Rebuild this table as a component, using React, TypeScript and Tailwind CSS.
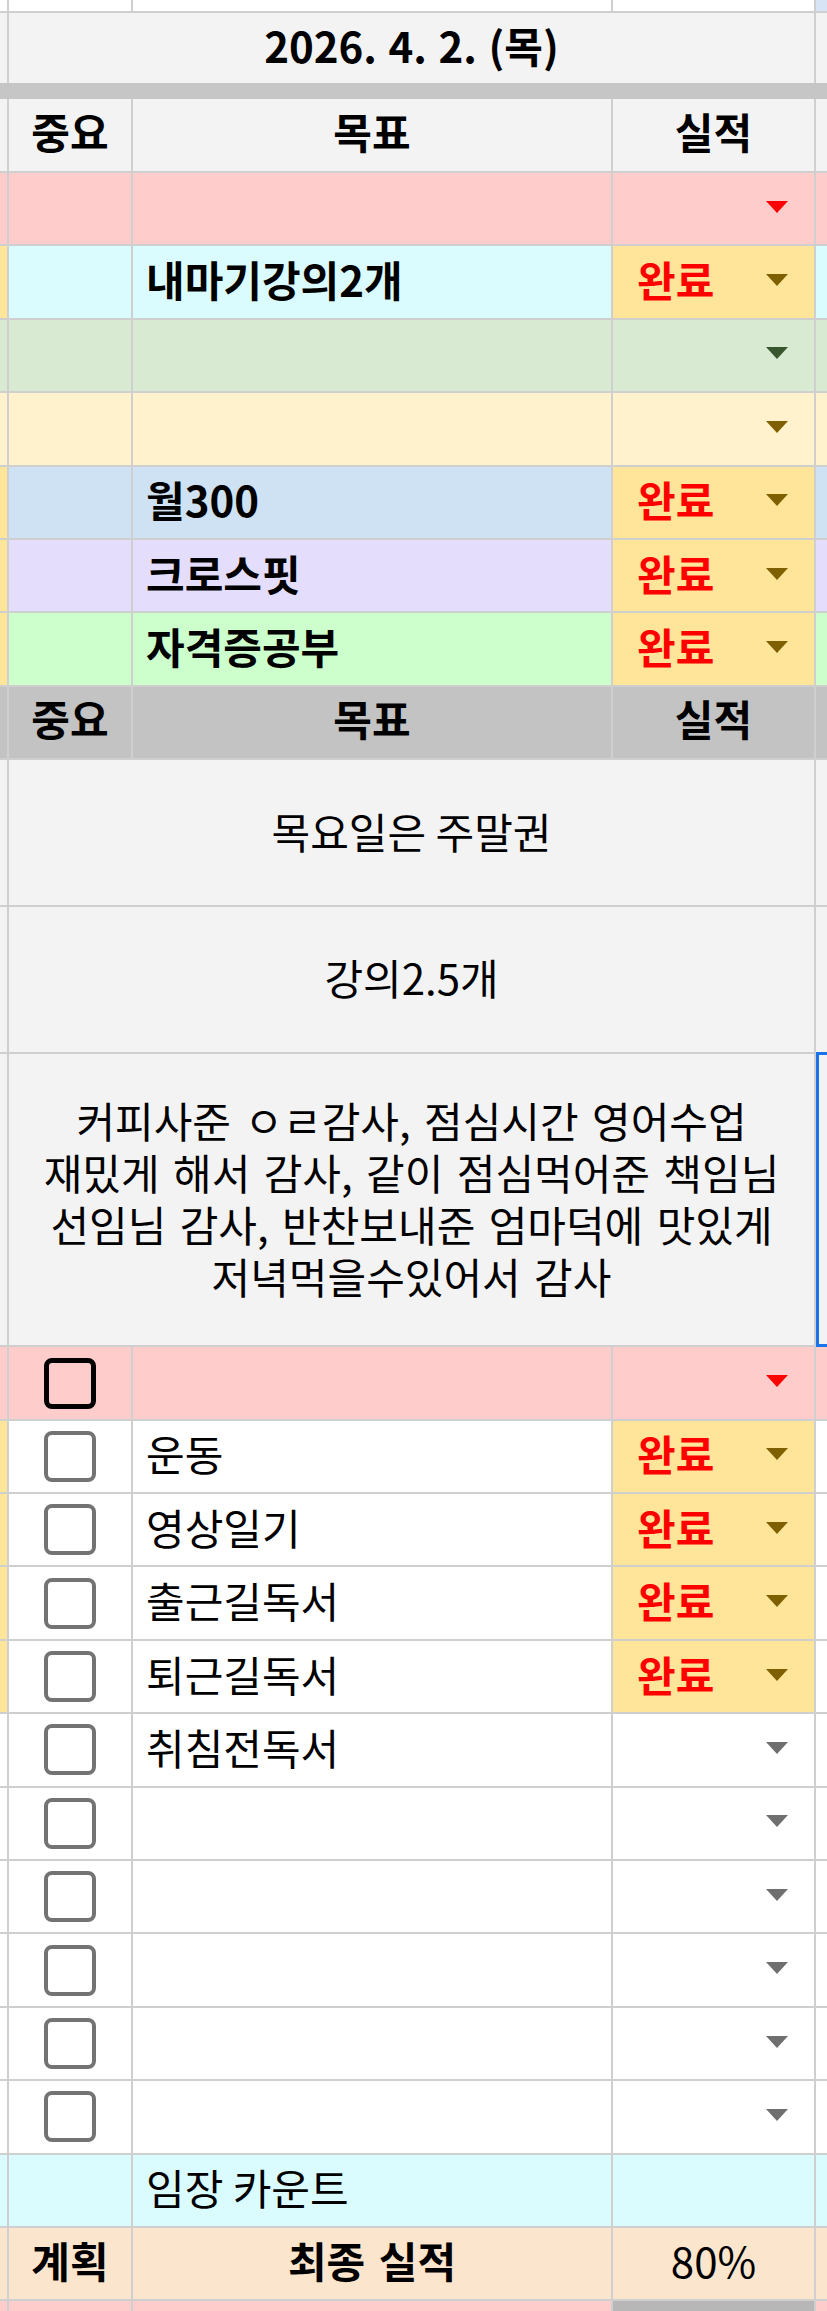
import type { ReactNode } from "react";

const LINE = "border-[#cfcfcf]";
const GRID = "grid grid-cols-[9px_124px_480px_203px_1fr]";
const WIDE = "grid grid-cols-[9px_807px_1fr]";
const ROW_H = "h-[73.4px]";

const PINK = "bg-[#ffcccc]";
const CYAN = "bg-[#dbfcff]";
const GREEN = "bg-[#d9ead3]";
const CREAM = "bg-[#fff2cc]";
const BLUE = "bg-[#cfe2f3]";
const LAVENDER = "bg-[#e4ddfc]";
const LIME = "bg-[#ccffcc]";
const GOLD = "bg-[#ffe599]";
const WHITE = "bg-white";
const PALE = "bg-[#f3f3f3]";
const GRAY = "bg-[#c3c3c3]";
const PEACH = "bg-[#fce5cd]";

const TRI_RED = "#ff0000";
const TRI_OLIVE = "#7f6000";
const TRI_GREEN = "#38572f";
const TRI_GRAY = "#6f6f6f";

function Tri({ color }: { color: string }) {
  return (
    <svg width="22" height="12" viewBox="0 0 22 12" className="ml-auto mb-[4px] shrink-0">
      <polygon points="0,0 22,0 11,12" fill={color} />
    </svg>
  );
}

function Check({ dark }: { dark?: boolean }) {
  return (
    <span
      className={
        "block h-[51px] w-[52px] rounded-[8px] " +
        (dark ? "border-[5px] border-black" : "border-[4px] border-[#737373] bg-white")
      }
    />
  );
}

function Edge({ bg, last }: { bg: string; last?: boolean }) {
  return <div className={`border-b-2 ${LINE} ${bg} ${last ? "" : "border-r-2"}`} />;
}

function Row({ left, right, children, h = ROW_H }: { left: string; right: string; children: ReactNode; h?: string }) {
  return (
    <div className={`${GRID} ${h}`}>
      <Edge bg={left} />
      {children}
      <Edge bg={right} last />
    </div>
  );
}

interface Task {
  bg: string;
  left: string;
  right?: string;
  text?: string;
  bold?: boolean;
  done?: boolean;
  tri?: string;
  check?: "dark" | "gray";
}

function TaskRow({ t }: { t: Task }) {
  const c3 = t.done ? GOLD : t.bg;
  return (
    <Row left={t.left} right={t.right ?? t.bg}>
      <div className={`flex items-center justify-center border-r-2 border-b-2 ${LINE} ${t.bg}`}>
        {t.check && <Check dark={t.check === "dark"} />}
      </div>
      <div
        className={`flex items-center border-r-2 border-b-2 ${LINE} ${t.bg} pb-[6px] pl-[13px] text-[42px] leading-none text-black ${
          t.bold ? "font-bold" : ""
        }`}
      >
        {t.text}
      </div>
      <div className={`flex items-center border-r-2 border-b-2 ${LINE} ${c3} pl-[24px] pr-[26px]`}>
        {t.done && <span className="pb-[6px] text-[42px] font-bold leading-none text-[#ff0000]">완료</span>}
        {t.tri && <Tri color={t.tri} />}
      </div>
    </Row>
  );
}

function HeaderRow({ bg, left, right, h = ROW_H }: { bg: string; left: string; right: string; h?: string }) {
  const cell = `flex items-center justify-center border-r-2 border-b-2 ${LINE} ${bg} pb-[8px] text-[42px] font-bold leading-none`;
  return (
    <Row left={left} right={right} h={h}>
      <div className={cell}>중요</div>
      <div className={cell}>목표</div>
      <div className={cell}>실적</div>
    </Row>
  );
}

function Note({ h, children, selected }: { h: string; children: ReactNode; selected?: boolean }) {
  return (
    <div className={`${WIDE} ${h}`}>
      <Edge bg={PALE} />
      <div
        className={`flex flex-col items-center justify-center border-r-2 border-b-2 ${LINE} ${PALE} pb-[4px] text-center text-[42px] leading-[52px] text-black`}
      >
        {children}
      </div>
      <div className={`relative border-b-2 ${LINE} ${PALE}`}>
        {selected && (
          <div className="absolute -top-[2px] -bottom-[2px] left-0 w-[40px] border-[3px] border-[#1a73e8]" />
        )}
      </div>
    </div>
  );
}

const GOALS: Task[] = [
  { bg: PINK, left: PINK, tri: TRI_RED },
  { bg: CYAN, left: GOLD, text: "내마기강의2개", bold: true, done: true, tri: TRI_OLIVE },
  { bg: GREEN, left: GREEN, tri: TRI_GREEN },
  { bg: CREAM, left: CREAM, tri: TRI_OLIVE },
  { bg: BLUE, left: GOLD, text: "월300", bold: true, done: true, tri: TRI_OLIVE },
  { bg: LAVENDER, left: GOLD, text: "크로스핏", bold: true, done: true, tri: TRI_OLIVE },
  { bg: LIME, left: GOLD, text: "자격증공부", bold: true, done: true, tri: TRI_OLIVE },
];

const ROUTINE: Task[] = [
  { bg: PINK, left: PINK, tri: TRI_RED, check: "dark" },
  { bg: WHITE, left: GOLD, text: "운동", done: true, tri: TRI_OLIVE, check: "gray" },
  { bg: WHITE, left: GOLD, text: "영상일기", done: true, tri: TRI_OLIVE, check: "gray" },
  { bg: WHITE, left: GOLD, text: "출근길독서", done: true, tri: TRI_OLIVE, check: "gray" },
  { bg: WHITE, left: GOLD, text: "퇴근길독서", done: true, tri: TRI_OLIVE, check: "gray" },
  { bg: WHITE, left: WHITE, text: "취침전독서", tri: TRI_GRAY, check: "gray" },
  { bg: WHITE, left: WHITE, tri: TRI_GRAY, check: "gray" },
  { bg: WHITE, left: WHITE, tri: TRI_GRAY, check: "gray" },
  { bg: WHITE, left: WHITE, tri: TRI_GRAY, check: "gray" },
  { bg: WHITE, left: WHITE, tri: TRI_GRAY, check: "gray" },
  { bg: WHITE, left: WHITE, tri: TRI_GRAY, check: "gray" },
];

export default function App() {
  return (
    <div className="h-[2311px] w-[827px] overflow-hidden bg-white font-['Noto_Sans_CJK_KR','Noto_Sans',sans-serif] text-black">
      {/* row cut off at the top */}
      <Row left={WHITE} right="bg-[#d6e4f6]" h="h-[13px]">
        <div className={`border-r-2 border-b-2 ${LINE} bg-white`} />
        <div className={`border-r-2 border-b-2 ${LINE} bg-white`} />
        <div className={`border-r-2 border-b-2 ${LINE} bg-white`} />
      </Row>

      {/* date */}
      <div className={`${WIDE} h-[70px]`}>
        <div className={`border-r-2 ${LINE} ${PALE}`} />
        <div className={`flex items-center justify-center border-r-2 ${LINE} ${PALE} pb-[6px] text-[42px] font-bold leading-none [word-spacing:2px]`}>
          2026. 4. 2. (목)
        </div>
        <div className={PALE} />
      </div>
      <div className="h-[16px] bg-[#c6c6c6]" />

      <HeaderRow bg={PALE} left={PALE} right={PALE} h="h-[74px]" />

      {GOALS.map((t, i) => (
        <TaskRow key={i} t={t} />
      ))}

      <HeaderRow bg={GRAY} left={GRAY} right={GRAY} />

      <Note h="h-[146.8px]">목요일은 주말권</Note>
      <Note h="h-[146.8px]">강의2.5개</Note>
      <Note h="h-[293.6px]" selected>
        <span className="whitespace-nowrap [word-spacing:4px]">커피사준 ㅇㄹ감사, 점심시간 영어수업</span>
        <span className="whitespace-nowrap [word-spacing:4px]">재밌게 해서 감사, 같이 점심먹어준 책임님</span>
        <span className="whitespace-nowrap [word-spacing:4px]">선임님 감사, 반찬보내준 엄마덕에 맛있게</span>
        <span className="whitespace-nowrap [word-spacing:4px]">저녁먹을수있어서 감사</span>
      </Note>

      {ROUTINE.map((t, i) => (
        <TaskRow key={i} t={t} />
      ))}

      <TaskRow t={{ bg: CYAN, left: CYAN, text: "임장 카운트" }} />

      <Row left={PEACH} right={PEACH}>
        <div className={`flex items-center justify-center border-r-2 border-b-2 ${LINE} ${PEACH} pb-[8px] text-[42px] font-bold leading-none`}>
          계획
        </div>
        <div className={`flex items-center justify-center border-r-2 border-b-2 ${LINE} ${PEACH} pb-[8px] text-[42px] font-bold leading-none [word-spacing:4px]`}>
          최종 실적
        </div>
        <div className={`flex items-center justify-center border-r-2 border-b-2 ${LINE} ${PEACH} pb-[8px] text-[42px] leading-none`}>
          80%
        </div>
      </Row>

      {/* next block, cut off */}
      <div className={`${GRID} h-[10px]`}>
        <div className={`border-r-2 ${LINE} ${PINK}`} />
        <div className={`border-r-2 ${LINE} ${PINK}`} />
        <div className={`border-r-2 ${LINE} ${PINK}`} />
        <div className={`border-r-2 ${LINE} bg-[#b7b7b7]`} />
        <div className={PINK} />
      </div>
    </div>
  );
}
